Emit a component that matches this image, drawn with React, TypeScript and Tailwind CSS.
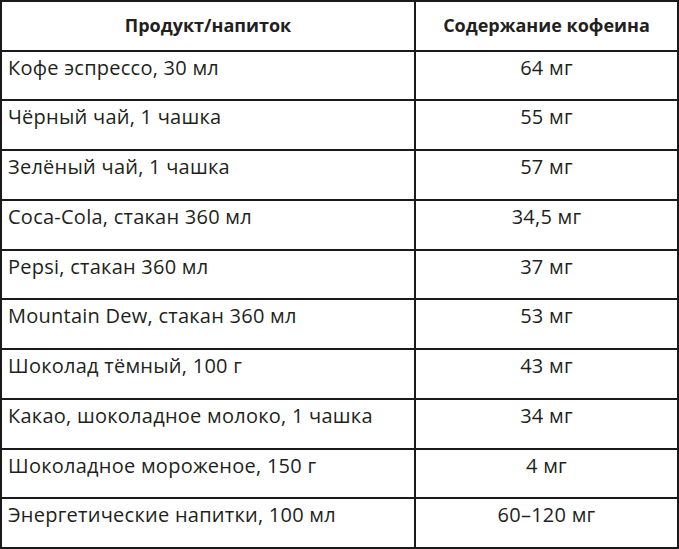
const rows: [string, string][] = [
  ['Кофе эспрессо, 30 мл', '64 мг'],
  ['Чёрный чай, 1 чашка', '55 мг'],
  ['Зелёный чай, 1 чашка', '57 мг'],
  ['Coca-Cola, стакан 360 мл', '34,5 мг'],
  ['Pepsi, стакан 360 мл', '37 мг'],
  ['Mountain Dew, стакан 360 мл', '53 мг'],
  ['Шоколад тёмный, 100 г', '43 мг'],
  ['Какао, шоколадное молоко, 1 чашка', '34 мг'],
  ['Шоколадное мороженое, 150 г', '4 мг'],
  ['Энергетические напитки, 100 мл', '60–120 мг'],
]

export default function App() {
  return (
    <div className="flex h-[549px] w-[679px] flex-col border-2 border-[#1a1a1a] bg-white font-['Open_Sans',sans-serif] text-[#231f20]">
      <div className="grid flex-1 grid-cols-[414px_1fr] border-b-2 border-[#1a1a1a] text-[18px] font-bold">
        <div className="flex items-center justify-center border-r-2 border-[#1a1a1a]">Продукт/напиток</div>
        <div className="flex items-center justify-center">Содержание кофеина</div>
      </div>
      {rows.map(([name, value], i) => (
        <div
          key={name}
          className={`grid flex-1 grid-cols-[414px_1fr] text-[20px] leading-none tracking-[0.25px] ${i < rows.length - 1 ? 'border-b-2 border-[#1a1a1a]' : ''}`}
        >
          <div className="border-r-2 border-[#1a1a1a] pl-[6px] pt-[6px]">{name}</div>
          <div className="pt-[6px] text-center">{value}</div>
        </div>
      ))}
    </div>
  )
}
